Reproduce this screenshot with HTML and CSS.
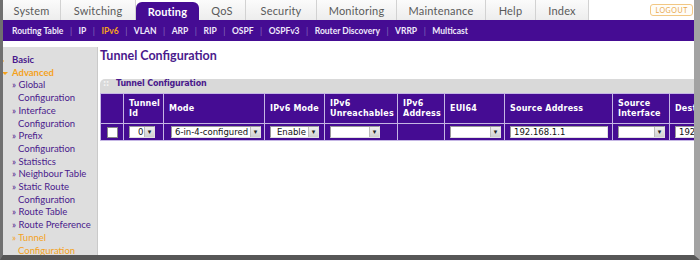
FILE: index.html
```html
<!DOCTYPE html>
<html>
<head>
    <title>Tunnel Configuration</title>
    <link rel="stylesheet" href="styles.css">
</head>
<body>
<div class="window">
    <!-- Top level tabs -->
    <div class="tabs">
        <a class="tab t-system">System</a>
        <a class="tab t-switching">Switching</a>
        <a class="tab t-routing active">Routing</a>
        <a class="tab t-qos">QoS</a>
        <a class="tab t-security">Security</a>
        <a class="tab t-monitoring">Monitoring</a>
        <a class="tab t-maintenance">Maintenance</a>
        <a class="tab t-help">Help</a>
        <a class="tab t-index">Index</a>
        <a class="logout">LOGOUT</a>
    </div>
    <div class="subnav">
        <a>Routing Table</a>
        <a>IP</a>
        <a class="current">IPv6</a>
        <a>VLAN</a>
        <a>ARP</a>
        <a>RIP</a>
        <a>OSPF</a>
        <a>OSPFv3</a>
        <a>Router Discovery</a>
        <a>VRRP</a>
        <a>Multicast</a>
    </div>

    <div class="main">
        <div class="sidebar">
            <div class="nav-head basic">Basic</div>
            <div class="nav-head advanced">Advanced</div>
            <div class="nav-item">&raquo; Global Configuration</div>
            <div class="nav-item">&raquo; Interface Configuration</div>
            <div class="nav-item">&raquo; Prefix Configuration</div>
            <div class="nav-item">&raquo; Statistics</div>
            <div class="nav-item">&raquo; Neighbour Table</div>
            <div class="nav-item">&raquo; Static Route Configuration</div>
            <div class="nav-item">&raquo; Route Table</div>
            <div class="nav-item">&raquo; Route Preference</div>
            <div class="nav-item selected">&raquo; Tunnel Configuration</div>
        </div>

        <div class="content">
            <h1>Tunnel Configuration</h1>
            <div class="panel">
                <div class="panel-title"><span class="grip">::</span>Tunnel Configuration</div>
                <table class="grid">
                    <colgroup>
                        <col class="c-check">
                        <col class="c-id">
                        <col class="c-mode">
                        <col class="c-v6mode">
                        <col class="c-unreach">
                        <col class="c-addr">
                        <col class="c-eui">
                        <col class="c-src">
                        <col class="c-srcif">
                        <col class="c-dest">
                    </colgroup>
                    <tr class="head">
                        <th></th>
                        <th>Tunnel Id</th>
                        <th>Mode</th>
                        <th>IPv6 Mode</th>
                        <th>IPv6 Unreachables</th>
                        <th>IPv6 Address</th>
                        <th>EUI64</th>
                        <th class="nowrap">Source Address</th>
                        <th>Source Interface</th>
                        <th class="nowrap">Destination Address</th>
                    </tr>
                    <tr class="row">
                        <td class="center"><span class="check"></span></td>
                        <td><span class="sel w-id"><select><option>0</option></select></span></td>
                        <td class="mode-cell"><span class="sel w-mode"><select><option>6-in-4-configured</option></select></span></td>
                        <td><span class="sel w-v6mode"><select><option>Enable</option></select></span></td>
                        <td><span class="sel w-unreach"><select><option></option></select></span></td>
                        <td></td>
                        <td><span class="sel w-eui"><select><option></option></select></span></td>
                        <td><input class="field w-src" value="192.168.1.1"></td>
                        <td><span class="sel w-srcif"><select><option></option></select></span></td>
                        <td><input class="field w-dest" value="192.168.1.2"></td>
                    </tr>
                </table>
            </div>
        </div>
    </div>
</div>
</body>
</html>
```

FILE: styles.css
```css
body {
    margin: 0;
    font-family: Lato, "Liberation Sans", sans-serif;
    background: #fff;
}
.window {
    width: 700px;
    height: 260px;
    box-sizing: border-box;
    border-left: 3px solid #707070;
    border-right: 6px solid #a3a3a3;
    border-bottom: 5px solid #575757;
    display: flex;
    flex-direction: column;
    overflow: hidden;
    background: #fff;
}
/* Top tabs */
.tabs {
    height: 20px;
    display: flex;
    align-items: flex-end;
    background: #fff;
}
.tab {
    height: 20px;
    box-sizing: border-box;
    display: flex;
    align-items: center;
    justify-content: center;
    font-size: 11px;
    color: #5a5a5a;
    background: linear-gradient(#fbfbfb, #ededed);
    border-right: 1px solid #d2d2d2;
    letter-spacing: 0.2px;
}
.tab.active {
    height: 18px;
    background: #450c93;
    color: #fff;
    font-weight: bold;
    border-radius: 6px 6px 0 0;
    border-right: none;
}
.t-system { width: 58px; }
.t-switching { width: 75px; }
.t-routing { width: 63px; }
.t-qos { width: 47px; }
.t-security { width: 71px; }
.t-monitoring { width: 80px; }
.t-maintenance { width: 89px; }
.t-help { width: 50px; }
.t-index { width: 53px; }
.logout {
    margin: 0 1px 0 auto;
    align-self: center;
    border: 1px solid #f2c783;
    border-radius: 3px;
    font-size: 7px;
    color: #e9a94f;
    padding: 1px 4px;
    letter-spacing: 0.6px;
    background: #fffdf8;
}
/* Second level menu */
.subnav {
    height: 21px;
    background: #450c93;
    display: flex;
    align-items: center;
    padding-left: 9px;
    font-size: 8.5px;
    font-weight: bold;
    color: #efe9fa;
}
.subnav a + a::before {
    content: "|";
    color: #8a70bd;
    font-weight: normal;
    margin: 0 6.5px;
}
.subnav .current {
    color: #f4a21d;
}
/* Body area */
.main {
    flex: 1;
    display: flex;
    min-height: 0;
}
.sidebar {
    width: 94px;
    margin-top: 6px;
    padding-top: 7px;
    background: #dedede;
    border-right: 1px solid #cacaca;
    font-size: 9.5px;
    line-height: 12.7px;
    color: #4a1a8c;
}
.nav-head {
    font-weight: bold;
    padding-left: 9px;
    position: relative;
}
.nav-head::before {
    content: "";
    position: absolute;
    left: -2px;
    top: 4px;
    border: 3px solid transparent;
    border-left-color: #f4a21d;
}
.nav-head.advanced {
    color: #f4a21d;
}
.nav-head.advanced::before {
    left: -1px;
    top: 5px;
    border-left-color: transparent;
    border-top-color: #f4a21d;
}
.nav-item {
    padding-left: 15px;
    text-indent: -6px;
}
.nav-item.selected {
    color: #f4a21d;
}
.content {
    flex: 1;
    min-width: 0;
    padding: 7px 0 0 2px;
    overflow: hidden;
}
h1 {
    font-size: 12.5px;
    margin: 0 0 16px;
    color: #4a1a8c;
}
.panel {
    overflow: hidden;
}
.panel-title {
    height: 14px;
    line-height: 14px;
    background: #d9d9d9;
    border-radius: 5px 0 0 0;
    font: bold 8px "DejaVu Sans", sans-serif;
    color: #4a1a8c;
    letter-spacing: -0.2px;
}
.grip {
    color: #f4f4f4;
    margin: 0 7px 0 3px;
}
/* Table */
.grid {
    border-collapse: collapse;
    table-layout: fixed;
    width: 660px;
    background: #450c93;
    font: bold 8px "DejaVu Sans", sans-serif;
    color: #fff;
}
.grid th, .grid td {
    border: 1px solid #c5b6e4;
    padding: 0 0 0 5px;
    text-align: left;
    vertical-align: middle;
}
.grid th {
    height: 29px;
    line-height: 10px;
    letter-spacing: 0.2px;
}
.grid th.nowrap {
    white-space: nowrap;
    overflow: hidden;
}
.grid td {
    height: 16px;
}
.grid td.center {
    padding: 0;
    text-align: center;
}
.c-check { width: 23px; }
.c-id { width: 40px; }
.c-mode { width: 101px; }
.c-v6mode { width: 60px; }
.c-unreach { width: 73px; }
.c-addr { width: 47px; }
.c-eui { width: 60px; }
.c-src { width: 108px; }
.c-srcif { width: 57px; }
.c-dest { width: 91px; }
.check {
    display: inline-block;
    width: 9px;
    height: 9px;
    background: #fff;
    border: 1px solid #888;
    vertical-align: middle;
}
.grid td.mode-cell {
    padding-left: 7px;
}
.sel {
    display: inline-block;
    position: relative;
    vertical-align: middle;
}
.sel select {
    -webkit-appearance: none;
    appearance: none;
    display: block;
    width: 100%;
    height: 12px;
    box-sizing: border-box;
    margin: 0;
    padding: 0 10px 0 3px;
    border: 1px solid #999;
    border-right-color: #e0e0e0;
    border-bottom-color: #e0e0e0;
    border-radius: 0;
    background: #fff;
    font: 8.5px "DejaVu Sans", sans-serif;
    color: #111;
}
/* Drop down button drawn over the select */
.sel::after {
    content: "\25BE";
    position: absolute;
    right: 1px;
    top: 1px;
    width: 9px;
    height: 10px;
    line-height: 10px;
    text-align: center;
    font-size: 7px;
    color: #222;
    background: linear-gradient(#f0f0f0, #cfcfcf);
    border-left: 1px solid #bbb;
}
.w-id { width: 26px; }
.w-id select { padding-left: 8px; }
.w-mode { width: 90px; }
.w-v6mode { width: 49px; }
.w-v6mode select { padding-left: 6px; }
.w-unreach { width: 50px; }
.w-eui { width: 51px; }
.w-srcif { width: 47px; }
.field {
    display: block;
    height: 12px;
    box-sizing: border-box;
    margin: 0;
    padding: 0 3px;
    border: 1px solid #999;
    border-right-color: #e0e0e0;
    border-bottom-color: #e0e0e0;
    font: 8.5px "DejaVu Sans", sans-serif;
    color: #111;
    background: #fff;
}
.w-src { width: 98px; }
.w-dest { width: 84px; }
```
